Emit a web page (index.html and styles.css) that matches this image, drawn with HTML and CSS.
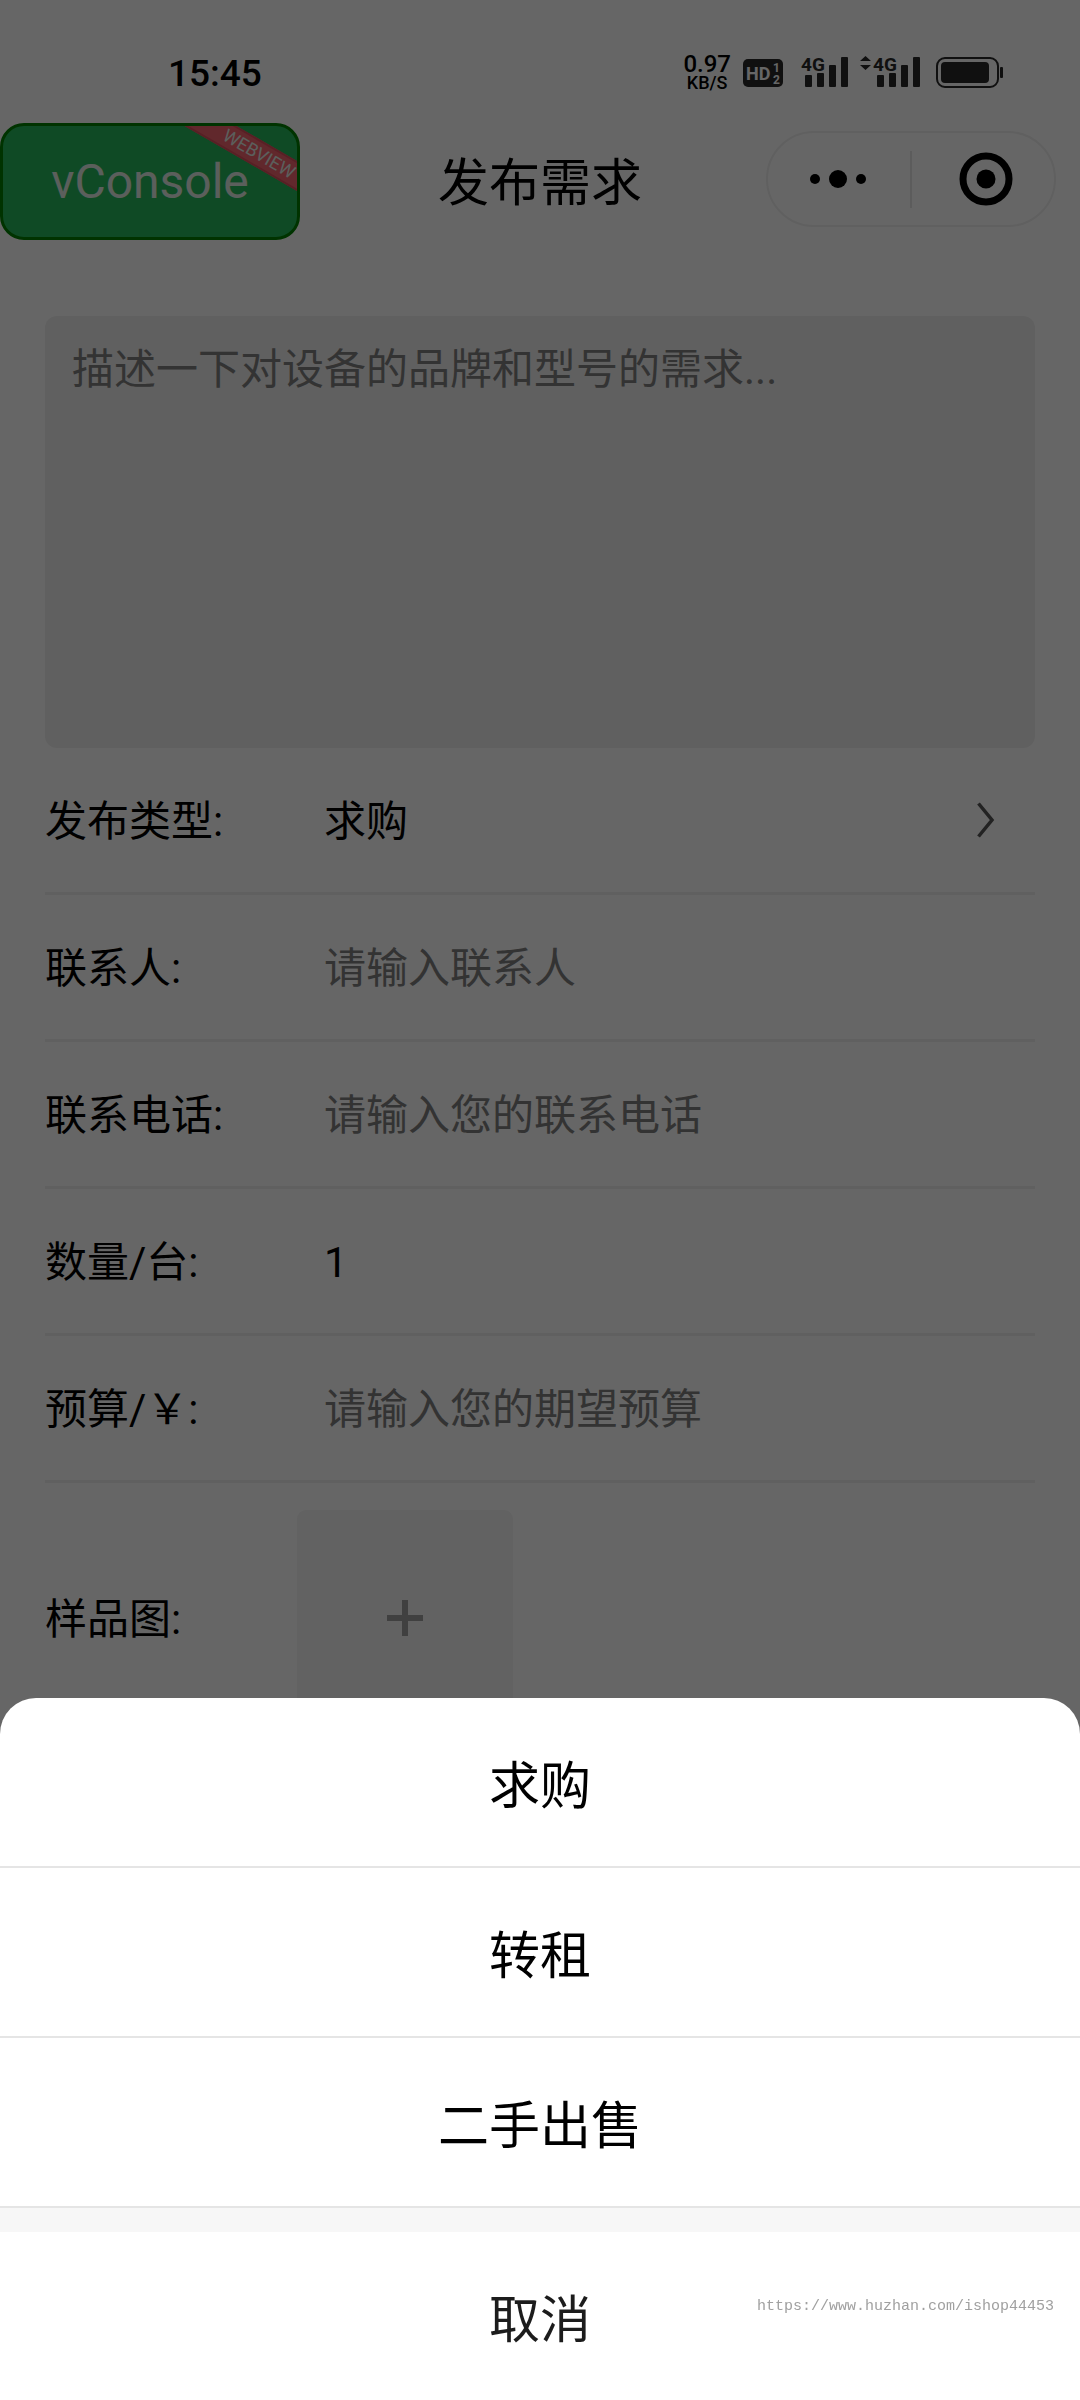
FILE: index.html
```html
<!DOCTYPE html>
<html lang="zh-CN">
<head>
<meta charset="utf-8">
<meta name="viewport" content="width=device-width, initial-scale=1">
<title>发布需求</title>
<link rel="stylesheet" href="styles.css">
</head>
<body>
<div class="page">
  <div class="status-bar">
    <span class="clock">15:45</span>
    <div class="indicators">
      <div class="speed"><span class="speed-value">0.97</span><span class="speed-unit">KB/S</span></div>
      <svg class="icon" width="40" height="34" viewBox="0 0 40 34">
        <rect x="0" y="3" width="40" height="28" rx="5"/>
        <text class="cut" x="3" y="24" font-size="18">HD</text>
        <text class="cut" x="30" y="16" font-size="12">1</text>
        <text class="cut" x="30" y="28" font-size="12">2</text>
      </svg>
      <svg class="icon" width="53" height="34" viewBox="-7 0 53 34">
        <text x="-1" y="15" font-size="19">4G</text>
        <rect x="3" y="19" width="7" height="12" rx="1"/><rect x="15" y="17" width="7" height="14" rx="1"/><rect x="27" y="9" width="7" height="22" rx="1"/><rect x="39" y="1" width="7" height="30" rx="1"/>
      </svg>
      <svg class="icon" width="60" height="34" viewBox="0 0 60 34">
        <path d="M5.500 0l5.500 5h-11zM5.500 14l5.500-5h-11z"/>
        <text x="13" y="15" font-size="19">4G</text>
        <rect x="17" y="19" width="7" height="12" rx="1"/><rect x="29" y="17" width="7" height="14" rx="1"/><rect x="41" y="9" width="7" height="22" rx="1"/><rect x="53" y="1" width="7" height="30" rx="1"/>
      </svg>
      <svg class="icon" width="71" height="34" viewBox="-4 0 71 34">
        <rect x="1" y="2" width="61" height="29" rx="8" fill="none" stroke="#282828" stroke-width="2"/>
        <rect x="5" y="6" width="48" height="21" rx="4"/><rect x="64" y="11" width="3" height="11" rx="1"/>
      </svg>
    </div>
  </div>

  <header class="nav">
    <h1 class="nav-title">发布需求</h1>
    <div class="capsule">
      <button class="capsule-btn" type="button" aria-label="更多">
        <svg width="58" height="20" viewBox="0 0 58 20"><circle cx="6" cy="10" r="5"/><circle cx="29" cy="10" r="9"/><circle cx="52" cy="10" r="5"/></svg>
      </button>
      <button class="capsule-btn capsule-close" type="button" aria-label="关闭">
        <svg width="54" height="54" viewBox="0 0 54 54"><circle cx="27" cy="27" r="23" fill="none" stroke="#000" stroke-width="7"/><circle cx="27" cy="27" r="9.500"/></svg>
      </button>
    </div>
  </header>

  <form class="form">
    <textarea class="desc" aria-label="需求描述" placeholder="描述一下对设备的品牌和型号的需求..."></textarea>
    <div class="row">
      <label class="label" for="type">发布类型:</label>
      <button class="field picker" id="type" type="button"><span class="picker-value">求购</span>
        <svg width="18" height="36" viewBox="0 0 18 36"><path d="M1.500 1.500L15 18L1.500 34.500" fill="none" stroke="#555" stroke-width="3.500"/></svg>
      </button>
    </div>
    <div class="row">
      <label class="label" for="name">联系人:</label>
      <input class="field" id="name" type="text" placeholder="请输入联系人">
    </div>
    <div class="row">
      <label class="label" for="phone">联系电话:</label>
      <input class="field" id="phone" type="tel" placeholder="请输入您的联系电话">
    </div>
    <div class="row">
      <label class="label" for="count">数量/台:</label>
      <input class="field" id="count" type="text" inputmode="numeric" value="1">
    </div>
    <div class="row">
      <label class="label" for="budget">预算/￥:</label>
      <input class="field" id="budget" type="text" placeholder="请输入您的期望预算">
    </div>
    <div class="upload-row">
      <label class="label upload-label" for="sample">样品图:</label>
      <button class="upload" id="sample" type="button" aria-label="添加图片">
        <svg width="36" height="36" viewBox="0 0 36 36"><path d="M18 0V36M0 18H36" stroke="#a0a0a0" stroke-width="6"/></svg>
      </button>
    </div>
  </form>

  <button class="vconsole" type="button">vConsole<span class="ribbon">WEBVIEW</span></button>
</div>

<div class="mask"></div>
<div class="sheet" role="dialog" aria-label="发布类型">
  <button class="sheet-item" type="button">求购</button>
  <button class="sheet-item" type="button">转租</button>
  <button class="sheet-item" type="button">二手出售</button>
  <button class="sheet-cancel" type="button">取消</button>
  <span class="watermark">https://www.huzhan.com/ishop44453</span>
</div>
</body>
</html>
```
FILE: styles.css
```css
* {
  box-sizing: border-box;
}

body {
  margin: 0;
  background: #fff;
  color: #000;
  font-family: Roboto, "Noto Sans CJK SC", sans-serif;
  font-size: 42px;
}

button,
input,
textarea {
  margin: 0;
  padding: 0;
  border: 0;
  background: none;
  color: inherit;
  font: inherit;
}

svg {
  display: block;
}

.page {
  position: relative;
  min-height: 100vh;
  overflow: hidden;
}

/* Status bar */
.status-bar {
  display: flex;
  justify-content: space-between;
  align-items: center;
  height: 107px;
  padding: 39px 77px 0 168px;
}

.clock {
  font-size: 37px;
  font-weight: 500;
}

.indicators {
  display: flex;
  align-items: center;
  gap: 12px;
}

.speed {
  display: flex;
  flex-direction: column;
  align-items: center;
  font-weight: 500;
}

.speed-value {
  font-size: 24px;
  line-height: 19px;
}

.speed-unit {
  font-size: 18px;
  line-height: 18px;
}

.icon {
  overflow: visible;
  fill: #282828;
  font-weight: 700;
}

.cut {
  fill: #fff;
}

/* Navigation bar */
.nav {
  position: relative;
  display: flex;
  align-items: center;
  justify-content: center;
  height: 144px;
}

.nav-title {
  margin: 0;
  font-size: 51px;
  font-weight: 400;
}

.capsule {
  position: absolute;
  top: 24px;
  right: 24px;
  display: flex;
  align-items: center;
  width: 290px;
  height: 96px;
  border: 2px solid #f0f0f0;
  border-radius: 48px;
}

.capsule-btn {
  display: flex;
  flex: none;
  align-items: center;
  justify-content: center;
  width: 142px;
  height: 57px;
  padding-right: 2px;
}

.capsule-close {
  flex: 1;
  padding: 0 0 0 5px;
  border-left: 2px solid #e5e5e5;
}

/* Form */
.form {
  padding: 65px 45px 0;
}

.desc {
  display: block;
  width: 100%;
  height: 432px;
  padding: 26px 27px;
  border-radius: 12px;
  background: #f0f0f0;
  line-height: 56px;
  resize: none;
}

::placeholder {
  color: #808080;
  opacity: 1;
}

.row {
  display: flex;
  align-items: center;
  height: 147px;
  border-bottom: 3px solid #f0f0f0;
}

.label {
  flex: none;
  width: 279px;
  padding-bottom: 5px;
}

.field {
  flex: 1;
  min-width: 0;
  height: 60px;
}

input.field {
  padding-top: 3px;
}

.picker {
  display: flex;
  align-items: center;
  justify-content: space-between;
  padding-right: 40px;
}

.picker-value {
  padding-bottom: 5px;
}

.upload-row {
  display: flex;
  align-items: center;
  padding-top: 27px;
}

.upload-label {
  width: 252px;
}

.upload {
  display: flex;
  align-items: center;
  justify-content: center;
  width: 216px;
  height: 216px;
  border-radius: 9px;
  background: #f5f5f5;
}

/* Floating debug button */
.vconsole {
  position: absolute;
  top: 123px;
  left: 0;
  width: 300px;
  height: 117px;
  overflow: hidden;
  border: 3px solid #008000;
  border-radius: 24px;
  background: #26b95d;
  color: #e4ede7;
  font-size: 48px;
}

.ribbon {
  position: absolute;
  top: 15px;
  right: -47px;
  width: 170px;
  border: solid #dc505c;
  border-width: 2px 0;
  background: #f3646e;
  font-size: 18px;
  line-height: 22px;
  transform: rotate(30deg);
}

/* Action sheet */
.mask {
  position: fixed;
  inset: 0;
  background: rgba(0, 0, 0, 0.6);
}

.sheet {
  position: fixed;
  right: 0;
  bottom: 0;
  left: 0;
  overflow: hidden;
  border-radius: 36px 36px 0 0;
  background: #fff;
  font-size: 51px;
}

.sheet-item,
.sheet-cancel {
  display: block;
  width: 100%;
}

.sheet-item {
  height: 170px;
  border-bottom: 2px solid #e5e5e5;
}

.sheet-cancel {
  height: 192px;
  border-top: 24px solid #f7f7f7;
  color: #1c1c1c;
}

.watermark {
  position: absolute;
  right: 26px;
  bottom: 84px;
  color: #a0a0a0;
  font-family: "Liberation Mono", monospace;
  font-size: 15px;
  line-height: 18px;
}
```
